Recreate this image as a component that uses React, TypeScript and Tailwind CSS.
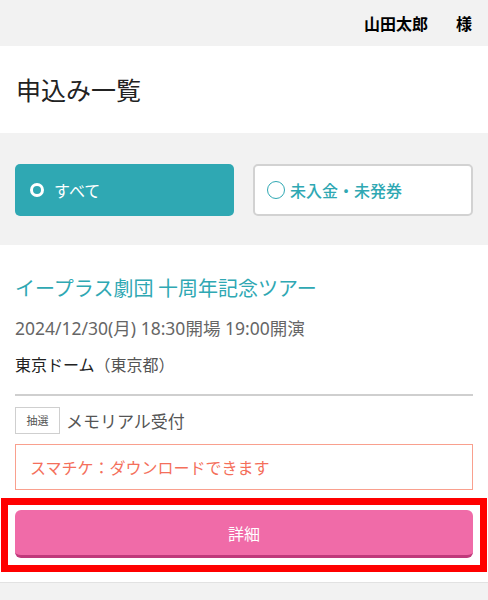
import React, { useState } from "react";

const jp = "font-['Noto_Sans_CJK_JP','Noto_Sans',sans-serif]";

const FilterButton: React.FC<{ label: string; active: boolean; onClick: () => void }> = ({
  label,
  active,
  onClick,
}) => {
  if (active) {
    return (
      <button
        type="button"
        onClick={onClick}
        className="flex h-[52px] flex-1 items-center gap-[10px] rounded-[5px] bg-[#2fa8b3] pl-[15px] text-[16px] text-white"
      >
        <span className="box-border h-[14px] w-[14px] rounded-full border-[3.5px] border-white" />
        {label}
      </button>
    );
  }
  return (
    <button
      type="button"
      onClick={onClick}
      className="flex h-[52px] flex-1 items-center gap-[5px] rounded-[5px] border-2 border-[#d2d2d2] bg-white pl-[12px] text-[16px] font-medium text-[#2fa8b3]"
    >
      <span className="box-border h-[18px] w-[18px] rounded-full border-[1.5px] border-[#2fa8b3]" />
      {label}
    </button>
  );
};

export default function App() {
  const [filter, setFilter] = useState("all");

  return (
    <div className={`min-h-[600px] bg-[#f2f2f2] ${jp}`}>
      <header className="flex h-[46px] items-center justify-end gap-[28px] pr-[16px] text-[16px] font-bold text-black">
        <span>山田太郎</span>
        <span>様</span>
      </header>

      <section className="flex h-[87px] items-center bg-white px-[16px]">
        <h1 className="text-[25px] leading-none text-[#222]">申込み一覧</h1>
      </section>

      <div className="flex gap-[19px] px-[15px] pt-[31px] pb-[29px]">
        <FilterButton label="すべて" active={filter === "all"} onClick={() => setFilter("all")} />
        <FilterButton label="未入金・未発券" active={filter === "unpaid"} onClick={() => setFilter("unpaid")} />
      </div>

      <article className="border-b border-[#e2e2e2] bg-white pt-[29px] pb-[10px]">
        <div className="px-[15px]">
          <h2 className="text-[20px] leading-[28px] text-[#2fa8b3]">イープラス劇団 十周年記念ツアー</h2>
          <p className="mt-[14px] font-['Noto_Sans','Noto_Sans_CJK_JP',sans-serif] text-[17.5px] leading-[24px] text-[#666]">
            2024/12/30(月) 18:30開場 19:00開演
          </p>
          <p className="mt-[13px] text-[16px] leading-[22px] text-[#222]">
            東京ドーム<span className="text-[#555]">（東京都）</span>
          </p>
          <div className="mt-[19px] h-[2px] bg-[#cfcfcf]" />
          <div className="mt-[11px] flex items-center gap-[6px]">
            <span className="flex h-[27px] w-[45px] items-center justify-center border border-[#cfcfcf] text-[11px] text-[#555]">
              抽選
            </span>
            <span className="text-[17px] text-[#555]">メモリアル受付</span>
          </div>
          <div className="mt-[10px] flex h-[46px] items-center border border-[#f9a08e] pl-[14px] text-[16px] text-[#f46f5b]">
            スマチケ：ダウンロードできます
          </div>
        </div>
        <div className="mx-px mt-[8px] border-[7px] border-[#ff0000] px-[7px] pt-[5px] pb-[7px]">
          <button
            type="button"
            className="flex h-[48px] w-full items-center justify-center rounded-[6px] border-b-[3px] border-[#c0397b] bg-[#f06ba8] text-[16px] text-white"
          >
            詳細
          </button>
        </div>
      </article>
    </div>
  );
}
